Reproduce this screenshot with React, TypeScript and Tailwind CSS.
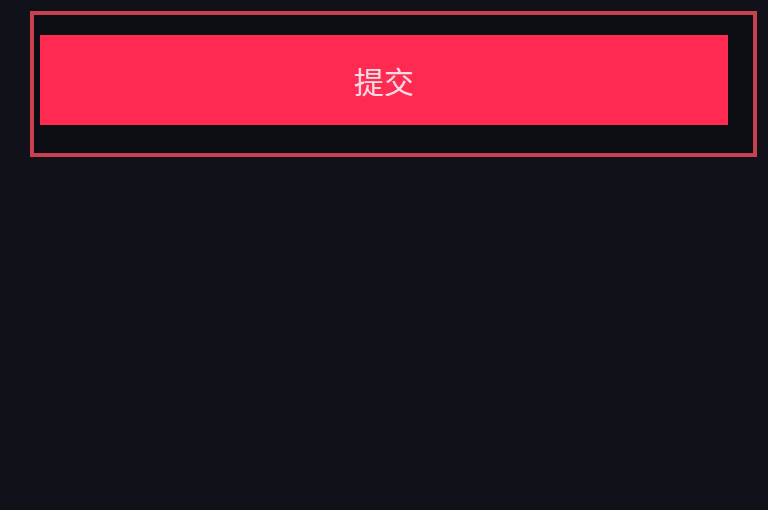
export default function App() {
  return (
    <main className="h-[510px] w-full bg-[#111219] pl-[30px] pt-[11px] font-['Noto_Sans_CJK_SC',sans-serif]">
      {/* highlighted submit area */}
      <div className="h-[146px] w-[727px] border-[4px] border-[#c9404f] bg-[#0d0e14] pl-[6px] pt-[20px]">
        <button className="flex h-[90px] w-[688px] items-center justify-center bg-[#fe2a52] text-[30px] leading-none text-[#f4dde2]">
          提交
        </button>
      </div>
    </main>
  );
}
